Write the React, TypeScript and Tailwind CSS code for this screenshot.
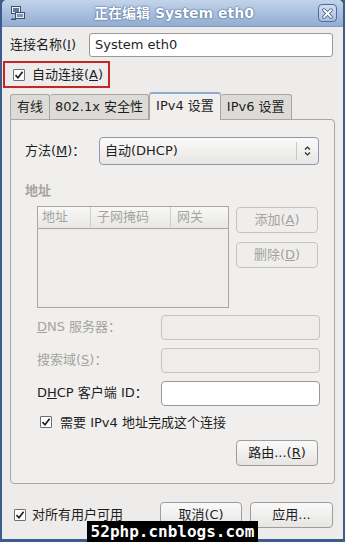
import React from "react";

const cjk = { fontFamily: '"DejaVu Sans", "Noto Sans CJK SC", sans-serif' };

function Check({ disabled = false }: { disabled?: boolean }) {
  return (
    <span className="inline-flex w-[12px] h-[12px] shrink-0 items-center justify-center border border-[#6f6f6f] bg-white rounded-[1px]">
      <svg width="10" height="10" viewBox="0 0 10 10">
        <path d="M1.5 5.2 L4 7.8 L8.6 1.8" fill="none" stroke={disabled ? "#999" : "#1f1f1f"} strokeWidth="1.7" />
      </svg>
    </span>
  );
}

function Btn({ children, disabled = false, w = "w-[82px]" }: { children: React.ReactNode; disabled?: boolean; w?: string }) {
  return (
    <div
      className={`${w} h-[26px] flex items-center justify-center rounded-[4px] border text-[13px] ${
        disabled
          ? "border-[#c4c3c0] bg-[#efeeec] text-[#a3a29f]"
          : "border-[#9e9d9a] bg-gradient-to-b from-[#fafafa] to-[#e6e5e3] text-[#1e1e1e]"
      }`}
    >
      {children}
    </div>
  );
}

export default function App() {
  return (
    <div className="relative w-[345px] h-[542px] overflow-hidden bg-[#3c5d8c]" style={cjk}>
      <div className="mx-[2px] h-[539px] flex flex-col rounded-t-[5px] overflow-hidden bg-[#edeceb]">
        {/* title bar */}
        <div className="h-[27px] shrink-0 flex items-center bg-gradient-to-b from-[#c3d4ea] via-[#a9c0df] to-[#93adcf] border-b border-[#7f9cc4] px-[6px]">
          <svg width="16" height="16" viewBox="0 0 16 16" className="shrink-0 ml-[2px]">
            <rect x="1.5" y="1.5" width="9" height="7" fill="#f4f4f4" stroke="#3d4f6a" />
            <rect x="3" y="3" width="6" height="4" fill="#5d7aa6" />
            <rect x="5.5" y="7.5" width="9" height="6" fill="#e8e8e8" stroke="#3d4f6a" />
            <rect x="7" y="9" width="6" height="3" fill="#7d96bd" />
            <rect x="1" y="13.5" width="5" height="1.5" fill="#3d4f6a" />
          </svg>
          <div className="flex-1 text-center text-[14px] font-bold text-white [text-shadow:0_0_2px_#3c5d8c,0_0_1px_#3c5d8c] pl-[4px]">
            正在编辑 System eth0
          </div>
          <div className="w-[19px] h-[18px] rounded-[4px] border border-[#4d6d9c] bg-gradient-to-b from-[#d2def0] to-[#a9bfdf] flex items-center justify-center">
            <svg width="11" height="11" viewBox="0 0 11 11">
              <path d="M2 2 L9 9 M9 2 L2 9" stroke="#3c5a86" strokeWidth="3.4" strokeLinecap="round" />
              <path d="M2 2 L9 9 M9 2 L2 9" stroke="#ffffff" strokeWidth="1.8" strokeLinecap="round" />
            </svg>
          </div>
        </div>

        {/* name row */}
        <div className="flex items-center pl-[8px] pr-[10px] pt-[6px] h-[30px]">
          <span className="text-[13px] text-[#1e1e1e] w-[79px]">
            连接名称(<u>I</u>)
          </span>
          <div className="flex-1 h-[24px] bg-white border border-[#9a9996] rounded-[3px] flex items-center px-[5px] text-[13px] text-[#1e1e1e]">
            System eth0
          </div>
        </div>

        {/* auto connect */}
        <div className="mt-[4px] ml-[1px] w-[107px] h-[27px] border-2 border-[#c42826] flex items-center pl-[8px] gap-[7px] text-[13px] text-[#1e1e1e]">
          <Check />
          <span>
            自动连接(<u>A</u>)
          </span>
        </div>

        {/* tabs */}
        <div className="ml-[8px] mr-[8px] mt-[3px] flex items-end h-[28px] text-[13px] text-[#1e1e1e]">
          <div className="h-[25px] px-[6px] flex items-center border border-b-0 border-[#a8a7a4] rounded-t-[3px] bg-[#dcdbd8]">有线</div>
          <div className="h-[25px] px-[5px] flex items-center border border-b-0 border-l-0 border-[#a8a7a4] rounded-t-[3px] bg-[#dcdbd8]">
            802.1x 安全性
          </div>
          <div className="h-[28px] px-[6px] flex items-center border border-b-0 border-[#a8a7a4] border-t-2 border-t-[#8fa9cf] rounded-t-[3px] bg-[#f0efed] -mb-px relative z-10 pb-[3px]">
            IPv4 设置
          </div>
          <div className="h-[25px] px-[6px] flex items-center border border-b-0 border-l-0 border-[#a8a7a4] rounded-t-[3px] bg-[#dcdbd8]">
            IPv6 设置
          </div>
        </div>

        {/* panel */}
        <div className="ml-[8px] mr-[8px] h-[365px] border border-[#a8a7a4] rounded-b-[4px] rounded-tr-[4px] bg-[#f0efed] flex flex-col text-[13px]">
          <div className="flex items-center mt-[17px] pl-[14px]">
            <span className="w-[74px] text-[#1e1e1e]">
              方法(<u>M</u>)：
            </span>
            <div className="w-[220px] h-[28px] rounded-[4px] border border-[#8d9aae] bg-gradient-to-b from-[#fbfbfb] to-[#e7e6e4] flex items-center text-[#1e1e1e]">
              <span className="flex-1 pl-[5px]">自动(DHCP)</span>
              <span className="w-px h-[18px] bg-[#c8c7c4]" />
              <svg width="21" height="14" viewBox="0 0 21 14">
                <path d="M8 5.5 L10.5 3 L13 5.5 M8 8.5 L10.5 11 L13 8.5" fill="none" stroke="#2b2b2b" strokeWidth="1.2" />
              </svg>
            </div>
          </div>

          <div className="pl-[14px] mt-[16px] font-bold text-[#a5a4a1]">地址</div>

          <div className="flex pl-[26px] mt-[5px]">
            <div className="w-[192px] h-[102px] border border-[#a8a7a4] bg-[#eeedeb] flex flex-col">
              <div className="h-[22px] flex items-center border-b border-[#a8a7a4] bg-gradient-to-b from-[#f8f8f7] to-[#e8e7e5] text-[#a5a4a1]">
                <span className="w-[53px] pl-[4px] border-r border-[#cfcecb]">地址</span>
                <span className="w-[80px] pl-[6px] border-r border-[#cfcecb]">子网掩码</span>
                <span className="pl-[6px]">网关</span>
              </div>
            </div>
            <div className="ml-[7px] flex flex-col gap-[9px] mt-[1px]">
              <Btn disabled>
                <span>
                  添加(<u>A</u>)
                </span>
              </Btn>
              <Btn disabled>
                <span>
                  删除(<u>D</u>)
                </span>
              </Btn>
            </div>
          </div>

          <div className="flex items-center pl-[26px] mt-[7px] h-[25px]">
            <span className="w-[124px] text-[#a5a4a1]">
              <u>D</u>NS 服务器：
            </span>
            <div className="w-[159px] h-[25px] rounded-[4px] border border-[#c4c3c0] bg-[#eeedeb]" />
          </div>
          <div className="flex items-center pl-[26px] mt-[8px] h-[25px]">
            <span className="w-[124px] text-[#a5a4a1]">
              搜索域(<u>S</u>)：
            </span>
            <div className="w-[159px] h-[25px] rounded-[4px] border border-[#c4c3c0] bg-[#eeedeb]" />
          </div>
          <div className="flex items-center pl-[26px] mt-[8px] h-[25px]">
            <span className="w-[124px] text-[#1e1e1e]">
              D<u>H</u>CP 客户端 ID：
            </span>
            <div className="w-[159px] h-[25px] rounded-[4px] border border-[#9a9996] bg-white" />
          </div>

          <div className="flex items-center pl-[29px] mt-[7px] gap-[8px] text-[#1e1e1e]">
            <Check />
            <span>需要 IPv4 地址完成这个连接</span>
          </div>

          <div className="flex justify-end pr-[16px] mt-[8px]">
            <Btn>
              <span>
                路由...(<u>R</u>)
              </span>
            </Btn>
          </div>
        </div>

        {/* bottom row */}
        <div className="flex items-center mt-[18px] pl-[12px] pr-[10px] text-[13px] text-[#1e1e1e]">
          <Check />
          <span className="ml-[6px] flex-1">对所有用户可用</span>
          <Btn w="w-[82px]">取消(C)</Btn>
          <div className="w-[8px]" />
          <Btn w="w-[83px]">应用...</Btn>
        </div>
      </div>

      {/* watermark */}
      <div
        className="absolute left-[87px] top-[521px] w-[171px] h-[21px] bg-black text-white text-[16px] font-bold flex items-center justify-center leading-none"
        style={{ fontFamily: '"DejaVu Sans Mono", monospace' }}
      >
        52php.cnblogs.com
      </div>
    </div>
  );
}
